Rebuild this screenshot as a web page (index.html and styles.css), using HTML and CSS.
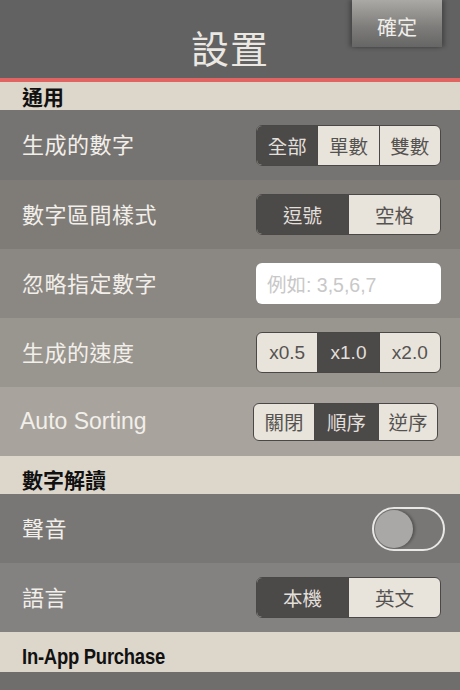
FILE: index.html
```html
<!DOCTYPE html>
<html lang="zh-Hant">
<head>
<meta charset="utf-8">
<link rel="stylesheet" href="styles.css">
</head>
<body>
<div class="screen">
  <header class="topbar">
    <h1 class="title">設置</h1>
    <button class="done">確定</button>
  </header>
  <div class="redline"></div>

  <div class="section s1">通用</div>
  <div class="row r1">
    <span class="label">生成的數字</span>
    <div class="seg w3">
      <span class="on">全部</span><span>單數</span><span>雙數</span>
    </div>
  </div>
  <div class="row r2">
    <span class="label">數字區間樣式</span>
    <div class="seg w2">
      <span class="on">逗號</span><span>空格</span>
    </div>
  </div>
  <div class="row r3">
    <span class="label">忽略指定數字</span>
    <div class="input">例如: 3,5,6,7</div>
  </div>
  <div class="row r4">
    <span class="label">生成的速度</span>
    <div class="seg w3 latin">
      <span>x0.5</span><span class="on">x1.0</span><span>x2.0</span>
    </div>
  </div>
  <div class="row r5">
    <span class="label latin-label">Auto Sorting</span>
    <div class="seg w3 shift">
      <span>關閉</span><span class="on">順序</span><span>逆序</span>
    </div>
  </div>

  <div class="section s2">數字解讀</div>
  <div class="row r6">
    <span class="label">聲音</span>
    <div class="toggle"><div class="knob"></div></div>
  </div>
  <div class="row r7">
    <span class="label">語言</span>
    <div class="seg w2">
      <span class="on">本機</span><span>英文</span>
    </div>
  </div>

  <div class="section s3"><span class="en">In-App Purchase</span></div>
  <div class="row r8"></div>
</div>
</body>
</html>
```

FILE: styles.css
```css
* { box-sizing: border-box; }
html, body { margin: 0; padding: 0; }
body {
  width: 460px;
  height: 690px;
  overflow: hidden;
  background: #6e6d6b;
  font-family: "Noto Sans CJK TC", "Noto Sans CJK SC", "Liberation Sans", sans-serif;
}
.screen { display: flex; flex-direction: column; width: 460px; }

.topbar {
  position: relative;
  height: 78px;
  background: #626262;
  display: flex;
  justify-content: center;
  align-items: flex-end;
}
.title {
  margin: 0 0 8px 0;
  font-weight: 400;
  font-size: 38px;
  line-height: 46px;
  color: #ebe8e3;
  letter-spacing: 1px;
}
.done {
  position: absolute;
  top: 0;
  left: 352px;
  width: 90px;
  height: 47px;
  border: none;
  padding: 6px 0 0 0;
  background: linear-gradient(#aba9a5, #7c7b79 60%, #666 100%);
  box-shadow: -3px 0 4px rgba(0,0,0,0.25), 3px 0 4px rgba(0,0,0,0.25);
  color: #f0eee9;
  font-family: inherit;
  font-size: 20px;
}
.redline { height: 4px; background: #e06462; }

.section {
  background: #ddd6cb;
  color: #111;
  font-weight: 700;
  font-size: 21px;
  padding-left: 22px;
  display: flex;
  align-items: center;
}
.s1 { height: 28px; }
.s2 { height: 38px; padding-top: 8px; }
.s3 { height: 40px; padding-top: 10px; }
.en {
  display: inline-block;
  font-family: "Liberation Sans", "Noto Sans CJK TC", sans-serif;
  font-size: 22.5px;
  letter-spacing: -0.3px;
  transform: scaleX(0.82);
  transform-origin: left center;
  white-space: nowrap;
}

.row {
  height: 69px;
  display: flex;
  align-items: center;
  justify-content: space-between;
  padding: 0 19px 0 22px;
}
.r1 { height: 70px; background: #767472; }
.r2 { background: #7f7c78; }
.r3 { background: #8b8782; }
.r4 { background: #99958f; }
.r5 { background: #a8a49d; padding-left: 20px; padding-right: 22px; }
.r6 { background: #787775; padding-right: 15px; }
.r7 { background: #838281; }
.r8 { height: 18px; background: #6f6e6c; }

.label {
  color: #f2efea;
  font-size: 22px;
  letter-spacing: 0.5px;
  padding-bottom: 4px;
}
.latin-label {
  font-family: "Liberation Sans", sans-serif;
  font-size: 23px;
  letter-spacing: 0;
  padding-bottom: 0;
}

.seg {
  display: flex;
  width: 185px;
  height: 41px;
  border: 1.5px solid #4a4846;
  border-radius: 6px;
  overflow: hidden;
  background: #e9e4db;
}
.seg span {
  flex: 1;
  display: flex;
  align-items: center;
  justify-content: center;
  color: #555351;
  font-size: 19.5px;
}
.seg span + span { border-left: 1.5px solid #4a4846; }
.seg .on { background: #4b4a49; color: #e2dfda; }
.seg.latin span { font-family: "Liberation Sans", sans-serif; font-size: 19px; }
.r5 .seg { height: 38px; }
.r5 .seg span:first-child { flex: 0 0 60px; }
.r5 .seg span:nth-child(2) { flex: 0 0 64px; }

.input {
  width: 185px;
  height: 41px;
  background: #ffffff;
  border-radius: 6px;
  padding-left: 11px;
  display: flex;
  align-items: center;
  color: #c8c8c8;
  font-size: 19.5px;
  font-family: "Liberation Sans", "Noto Sans CJK TC", sans-serif;
}

.toggle {
  width: 73px;
  height: 44px;
  border: 2.5px solid #e9e8e6;
  border-radius: 22px;
  background: #787775;
  padding: 1px;
}
.knob {
  width: 38px;
  height: 38px;
  border-radius: 50%;
  background: #a9a8a6;
  box-shadow: 2px 0 3px rgba(0,0,0,0.3);
}
```
